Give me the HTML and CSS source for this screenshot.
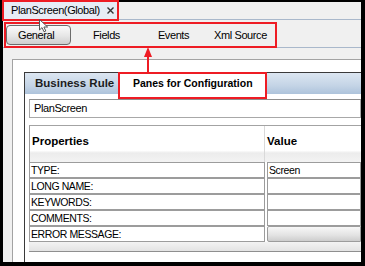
FILE: index.html
```html
<!DOCTYPE html>
<html lang="en">
<head>
    <meta charset="UTF-8">
    <title>PlanScreen(Global)</title>
    <link rel="stylesheet" href="styles.css">
</head>
<body>
    <div class="screen">
        <div class="window">
            <div class="doc-tabs">
                <div class="doc-tab">
                    <span>PlanScreen(Global)</span>
                    <svg class="close" width="7" height="7" viewBox="0 0 7 7">
                        <path d="M0.5 0.5 L6.5 6.5 M6.5 0.5 L0.5 6.5" stroke="#333" stroke-width="1.4"/>
                    </svg>
                </div>
            </div>
            <div class="pane-tabs">
                <div class="pane-tab active">General</div>
                <div class="pane-tab">Fields</div>
                <div class="pane-tab">Events</div>
                <div class="pane-tab">Xml Source</div>
            </div>
            <div class="content">
                <div class="outer">
                    <div class="panel">
                        <div class="panel-head">Business Rule</div>
                        <div class="name-field">PlanScreen</div>
                        <div class="props">
                            <div class="props-head">
                                <div class="col-prop">Properties</div>
                                <div class="col-val">Value</div>
                            </div>
                            <div class="prop-row">
                                <div class="prop-name">TYPE:</div>
                                <div class="prop-val">Screen</div>
                            </div>
                            <div class="prop-row">
                                <div class="prop-name">LONG NAME:</div>
                                <div class="prop-val"></div>
                            </div>
                            <div class="prop-row">
                                <div class="prop-name">KEYWORDS:</div>
                                <div class="prop-val"></div>
                            </div>
                            <div class="prop-row">
                                <div class="prop-name">COMMENTS:</div>
                                <div class="prop-val"></div>
                            </div>
                            <div class="prop-row">
                                <div class="prop-name">ERROR MESSAGE:</div>
                                <div class="prop-val button-val"></div>
                            </div>
                            <div class="props-foot"></div>
                        </div>
                    </div>
                </div>
            </div>
        </div>

        <!-- annotations drawn over the screenshot -->
        <div class="mark mark-tab"></div>
        <div class="mark mark-panes"></div>
        <svg class="arrow" width="10" height="26" viewBox="0 0 10 26">
            <polygon points="5,0 1,10 9,10" fill="#ee1c24"/>
            <rect x="4" y="9" width="2" height="17" fill="#ee1c24"/>
        </svg>
        <div class="callout">Panes for Configuration</div>
        <svg class="cursor" width="12" height="14" viewBox="0 0 12 14">
            <path d="M0.5 0.5 V11 L3 8.6 L5 12.8 L6.8 12 L4.9 8 H8.6 Z" fill="#fff" stroke="#555" stroke-width="1"/>
        </svg>
    </div>
</body>
</html>
```

FILE: styles.css
```css
body {
    margin: 0;
    font-family: "Liberation Sans", Arial, sans-serif;
    font-size: 11px;
    letter-spacing: -0.4px;
    color: #000;
}
.screen {
    position: relative;
    width: 365px;
    height: 266px;
    box-sizing: border-box;
    padding: 2px 4px 4px 3px;
    background-color: #000;
}
.window {
    height: 100%;
    display: flex;
    flex-direction: column;
    background-color: #f0f0f0;
    overflow: hidden;
}

/* document tab */
.doc-tabs {
    height: 18px;
    box-sizing: border-box;
    border-bottom: 1px solid #a9b8cb;
    display: flex;
}
.doc-tab {
    width: 116px;
    box-sizing: border-box;
    padding: 0 4px 0 8px;
    display: flex;
    align-items: center;
    justify-content: space-between;
    background-color: #e7ecf5;
    border-right: 1px solid #a9b8cb;
    line-height: 17px;
}
.close {
    display: block;
}

/* configuration panes */
.pane-tabs {
    height: 28px;
    box-sizing: border-box;
    padding: 5px 0 0 3px;
    border-bottom: 1px solid #a9b8cb;
    display: flex;
    align-items: flex-start;
}
.pane-tab {
    width: 67px;
    height: 20px;
    line-height: 20px;
    text-align: center;
}
.pane-tab.active {
    width: 65px;
    margin-right: 2px;
    box-sizing: border-box;
    padding-left: 11px;
    text-align: left;
    line-height: 18px;
    border: 1px solid #6c6c6c;
    border-radius: 4px;
    background: linear-gradient(#fbfbfb, #e6e6e6 55%, #cfcfcf);
}

/* business rule panel */
.content {
    flex: 1;
    display: flex;
    padding: 11px 0 0 9px;
}
.outer {
    flex: 1;
    display: flex;
    padding: 12px 0 0 11px;
    background-color: #fff;
    border-left: 1px solid #a3a3a3;
    border-top: 1px solid #a3a3a3;
}
.panel {
    flex: 1;
    background-color: #fff;
    border-left: 1px solid #3a3a3a;
    border-top: 1px solid #3a3a3a;
}
.panel-head {
    height: 21px;
    line-height: 21px;
    padding-left: 10px;
    font-size: 11.5px;
    font-weight: bold;
    letter-spacing: 0;
    color: #1c1c1c;
    background: linear-gradient(#dce6f1, #c4d4e6 60%, #adc3db);
}
.name-field {
    margin: 5px 0 0 4px;
    height: 19px;
    box-sizing: border-box;
    padding-left: 4px;
    line-height: 17px;
    border: 1px solid #a8a8a8;
    border-top-color: #8e8e8e;
}

/* properties grid */
.props {
    margin: 7px 0 0 4px;
}
.props-head {
    height: 37px;
    box-sizing: border-box;
    display: flex;
    border-top: 1px solid #a3a3a3;
    border-left: 1px solid #9a9a9a;
    background: linear-gradient(#fff, #fff 68%, #ececec 75%, #f3f3f3);
    font-size: 11.5px;
    font-weight: bold;
    letter-spacing: 0;
    line-height: 14px;
}
.col-prop {
    width: 235px;
    box-sizing: border-box;
    padding: 8px 0 0 2px;
    border-right: 1px solid #d9d9d9;
}
.col-val {
    padding: 8px 0 0 2px;
}
.prop-row {
    display: flex;
    height: 16px;
    font-size: 10.5px;
    line-height: 14px;
}
.prop-name {
    width: 236px;
    box-sizing: border-box;
    padding-left: 1px;
    border: 1px solid #9c9c9c;
}
.prop-val {
    flex: 1;
    margin-left: 2px;
    padding-left: 1px;
    border: 1px solid #9c9c9c;
}
.button-val {
    border-radius: 2px 0 0 2px;
    background: linear-gradient(#f7f7f7, #e2e2e2 60%, #cdcdcd);
}
.props-foot {
    height: 10px;
    box-sizing: border-box;
    border-bottom: 1px solid #8f8f8f;
    background: linear-gradient(#f3f3f3, #e3e3e3);
}

/* red annotations */
.mark {
    position: absolute;
    box-sizing: border-box;
    border: 2px solid #ee1c24;
}
.mark-tab {
    left: 2px;
    top: 0;
    width: 117px;
    height: 21px;
}
.mark-panes {
    left: 4px;
    top: 22px;
    width: 273px;
    height: 26px;
}
.arrow {
    position: absolute;
    left: 143px;
    top: 47px;
}
.callout {
    position: absolute;
    left: 118px;
    top: 72px;
    width: 149px;
    height: 27px;
    box-sizing: border-box;
    padding: 2px 0 0 13px;
    line-height: 14px;
    border: 2px solid #ee1c24;
    background-color: #fff;
    font-size: 10.5px;
    font-weight: bold;
    letter-spacing: 0;
}
.cursor {
    position: absolute;
    left: 39px;
    top: 19px;
}
```
